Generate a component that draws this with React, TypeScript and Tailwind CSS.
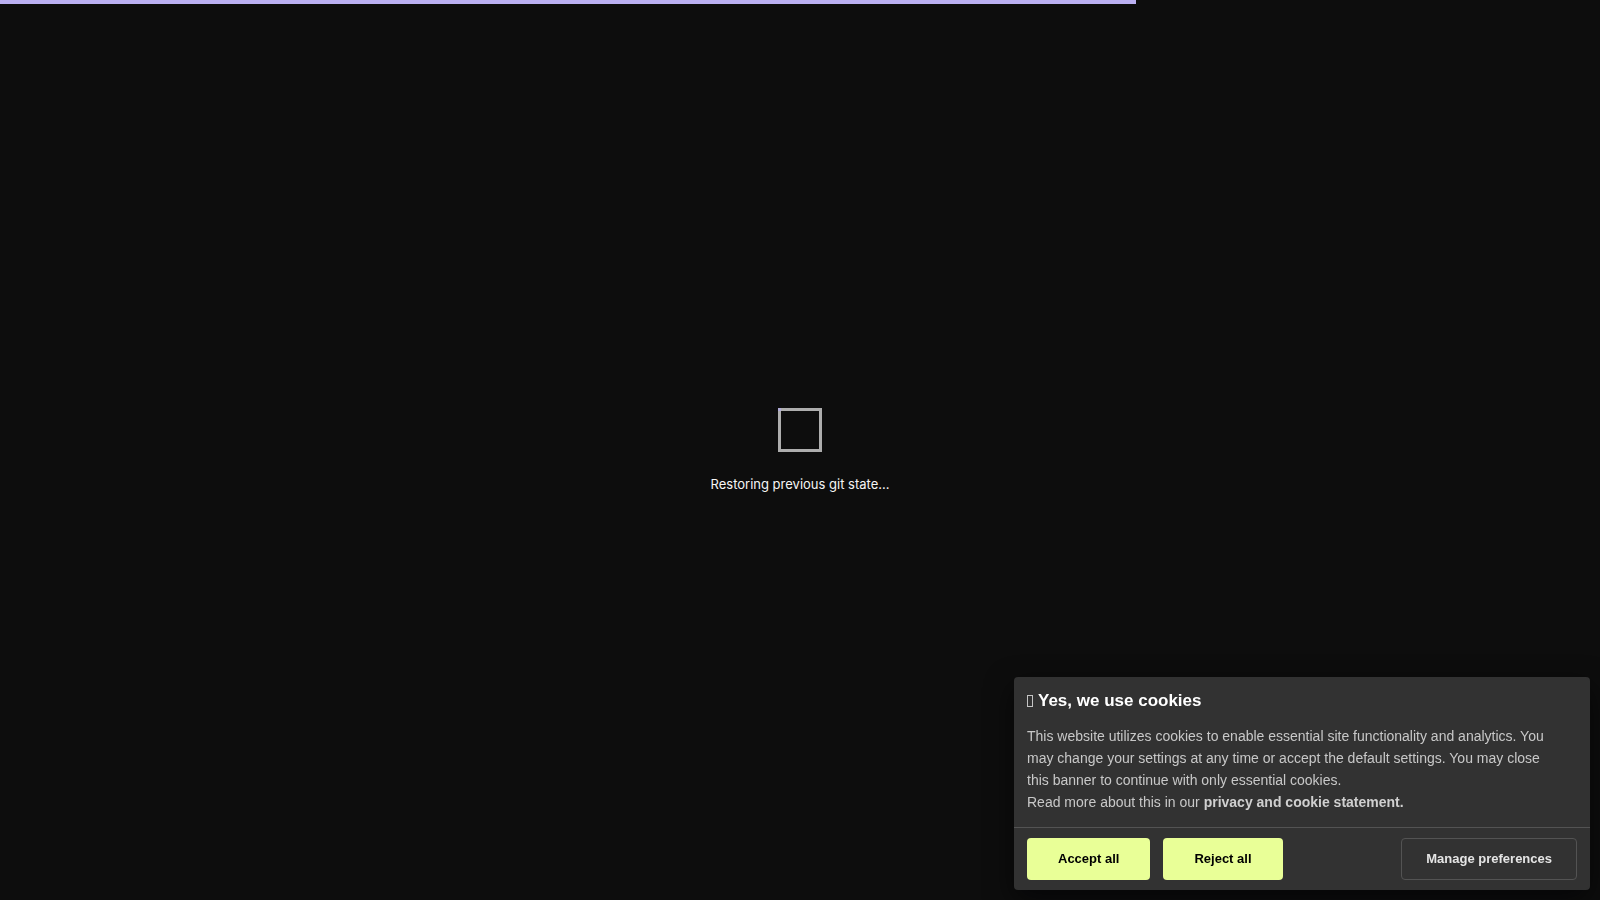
import React from 'react';

interface LoadingScreenProps {
  message: string;
  progress: number;
}

const Spinner: React.FC = () => {
  return (
    <svg className="w-11 h-11" viewBox="0 0 44 44" fill="none" aria-hidden="true">
      <rect x="1.5" y="1.5" width="41" height="41" stroke="#adadad" strokeWidth="3" />
      <path d="M0 1.5H3" stroke="#b1abd8" strokeWidth="3" />
    </svg>
  );
};

const LoadingScreen: React.FC<LoadingScreenProps> = ({ message, progress }) => {
  return (
    <div className="min-h-screen flex flex-col">
      <div className="h-1 bg-[#bbb0f2]" style={{ width: `${progress}%` }} />
      <main className="flex-1 flex flex-col items-center justify-center gap-[22px] pb-0.5">
        <Spinner />
        <p className="font-['Inter',sans-serif] text-[13px] leading-5 text-[#f5f5f5]">{message}</p>
      </main>
    </div>
  );
};

const CookieBanner: React.FC = () => {
  const primaryButton =
    'h-[42px] px-[31px] rounded bg-[#e9ff97] text-black text-[13px] font-bold cursor-pointer hover:bg-[#dcf582]';

  return (
    <section
      aria-labelledby="cookie-title"
      className="fixed right-2.5 bottom-2.5 w-xl max-w-[calc(100vw-20px)] rounded bg-[#323232] shadow-[0_10px_28px_rgba(2,2,3,0.6)] font-['Liberation_Sans',Arial,sans-serif]"
    >
      <div className="px-[13px] pt-3 pb-3.5">
        <h2
          id="cookie-title"
          className="flex items-center gap-[5px] text-[17px] leading-6 font-bold text-white"
        >
          <span className="w-1.5 h-3 border border-[#c4c4c4]" aria-hidden="true" />
          Yes, we use cookies
        </h2>
        <p className="mt-3 pr-4 text-[14px] leading-[22px] text-[#c8c8c8]">
          This website utilizes cookies to enable essential site functionality and analytics. You
          may change your settings at any time or accept the default settings. You may close this
          banner to continue with only essential cookies.
          <br />
          Read more about this in our{' '}
          <a href="#privacy" className="font-bold text-[#d0d0d0]">
            privacy and cookie statement.
          </a>
        </p>
      </div>
      <div className="flex items-center gap-[13px] border-t border-[#535353] px-[13px] py-2.5">
        <button className={primaryButton}>Accept all</button>
        <button className={primaryButton}>Reject all</button>
        <button className="ml-auto h-[42px] px-6 rounded border border-[#535353] text-[#e5e5e5] text-[13px] font-bold cursor-pointer hover:bg-white/5">
          Manage preferences
        </button>
      </div>
    </section>
  );
};

export default function App() {
  return (
    <div className="min-h-screen bg-[#0d0d0d]">
      <LoadingScreen message="Restoring previous git state..." progress={71} />
      <CookieBanner />
    </div>
  );
}
